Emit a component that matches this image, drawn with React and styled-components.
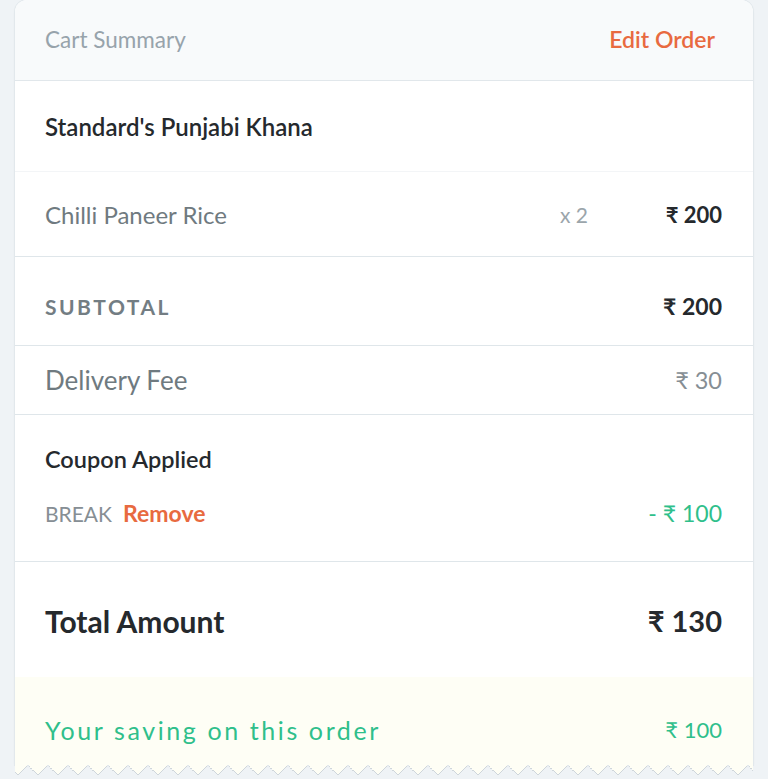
import styled, { createGlobalStyle } from "styled-components";

const GlobalStyle = createGlobalStyle`
  html, body {
    margin: 0;
    padding: 0;
    background: #eff3f6;
  }
  body {
    font-family: "Lato", "Noto Sans", sans-serif;
    -webkit-font-smoothing: antialiased;
  }
`;

const Page = styled.div`
  padding: 0 15px;
  min-height: 779px;
  box-sizing: border-box;
`;

const Card = styled.div`
  background: #fff;
  border-radius: 12px 12px 0 0;
  box-shadow: 0 0 0 1px #e2e8ec, 0 1px 3px rgba(40, 60, 80, 0.06);
`;

const Header = styled.div`
  display: flex;
  align-items: center;
  justify-content: space-between;
  height: 80px;
  padding: 0 38px 0 30px;
  background: #f8fafb;
  border-radius: 12px 12px 0 0;
  border-bottom: 1px solid #e1e7eb;
`;

const HeaderTitle = styled.div`
  font-size: 22.5px;
  color: #97a3ab;
  margin-top: -2px;
`;

const EditLink = styled.a`
  font-size: 23px;
  font-weight: 600;
  color: #e86a40;
  text-decoration: none;
  margin-top: -2px;
`;

const Row = styled.div`
  display: flex;
  align-items: center;
  justify-content: space-between;
  height: ${(p) => p.$h}px;
  padding: ${(p) => p.$pt || 0}px 31px 0 30px;
  border-bottom: 1px solid ${(p) => (p.$faint ? "#f3f5f7" : "#dfe6ea")};
  box-sizing: border-box;
`;

const Restaurant = styled.div`
  font-size: 24px;
  font-weight: 600;
  color: #25292d;
`;

const ItemName = styled.div`
  flex: 1;
  font-size: 24px;
  color: #6f7a80;
`;

const Qty = styled.div`
  font-size: 21px;
  color: #9ba5ab;
`;

const Amount = styled.div`
  min-width: ${(p) => p.$w || 0}px;
  text-align: right;
  font-size: ${(p) => p.$size || 21}px;
  font-weight: ${(p) => p.$weight || 400};
  color: ${(p) => p.$color || "#25292d"};
`;

const Label = styled.div`
  font-size: ${(p) => p.$size || 21}px;
  font-weight: ${(p) => p.$weight || 400};
  color: ${(p) => p.$color || "#6f7a80"};
  letter-spacing: ${(p) => p.$ls || 0}px;
  text-transform: ${(p) => (p.$upper ? "uppercase" : "none")};
`;

const CouponBlock = styled.div`
  padding: 30px 31px 34px 30px;
  border-bottom: 1px solid #dfe6ea;
  display: flex;
  flex-direction: column;
  gap: 26px;
`;

const CouponTitle = styled.div`
  font-size: 23.5px;
  font-weight: 600;
  color: #25292d;
`;

const CouponLine = styled.div`
  display: flex;
  align-items: center;
  justify-content: space-between;
`;

const CouponCode = styled.div`
  display: flex;
  align-items: baseline;
  gap: 11px;
  font-size: 21px;
  color: #868e94;
`;

const Remove = styled.a`
  font-size: 23px;
  font-weight: 700;
  color: #e86a40;
  text-decoration: none;
`;

const Savings = styled.div`
  display: flex;
  align-items: center;
  justify-content: space-between;
  height: 88px;
  padding: 17px 31px 0 30px;
  box-sizing: border-box;
  background: #fefef5;
`;

const Zigzag = styled.div`
  height: 10px;
  background:
    linear-gradient(to bottom right, #fefef5 50%, transparent 50%) 3px -10px / 20px 20px repeat-x,
    linear-gradient(to bottom left, #fefef5 50%, transparent 50%) 3px -10px / 20px 20px repeat-x;
  filter: drop-shadow(0 1px 0.5px #cfd6db);
`;

export default function App() {
  return (
    <Page>
      <GlobalStyle />
      <Card>
        <Header>
          <HeaderTitle>Cart Summary</HeaderTitle>
          <EditLink href="#">Edit Order</EditLink>
        </Header>
        <Row $h={91} $faint>
          <Restaurant>Standard's Punjabi Khana</Restaurant>
        </Row>
        <Row $h={85}>
          <ItemName>Chilli Paneer Rice</ItemName>
          <Qty>x 2</Qty>
          <Amount $w={134} $size={22} $weight={700}>₹ 200</Amount>
        </Row>
        <Row $h={89} $pt={10}>
          <Label $size={21} $weight={700} $ls={2.5} $upper $color="#737d83">
            Subtotal
          </Label>
          <Amount $size={23} $weight={700}>₹ 200</Amount>
        </Row>
        <Row $h={69}>
          <Label $size={26}>Delivery Fee</Label>
          <Amount $size={23.5} $color="#868e94">₹ 30</Amount>
        </Row>
        <CouponBlock>
          <CouponTitle>Coupon Applied</CouponTitle>
          <CouponLine>
            <CouponCode>
              BREAK <Remove href="#">Remove</Remove>
            </CouponCode>
            <Amount $size={23} $color="#2fbf8b">- ₹ 100</Amount>
          </CouponLine>
        </CouponBlock>
        <Row $h={115} $pt={2} style={{ borderBottom: "none" }}>
          <Label $size={30} $weight={700} $color="#25292d">
            Total Amount
          </Label>
          <Amount $size={29} $weight={700}>₹ 130</Amount>
        </Row>
        <Savings>
          <Label $size={25} $ls={2.6} $color="#2fbf8b">
            Your saving on this order
          </Label>
          <Amount $size={22} $color="#2fbf8b">₹ 100</Amount>
        </Savings>
      </Card>
      <Zigzag />
    </Page>
  );
}
